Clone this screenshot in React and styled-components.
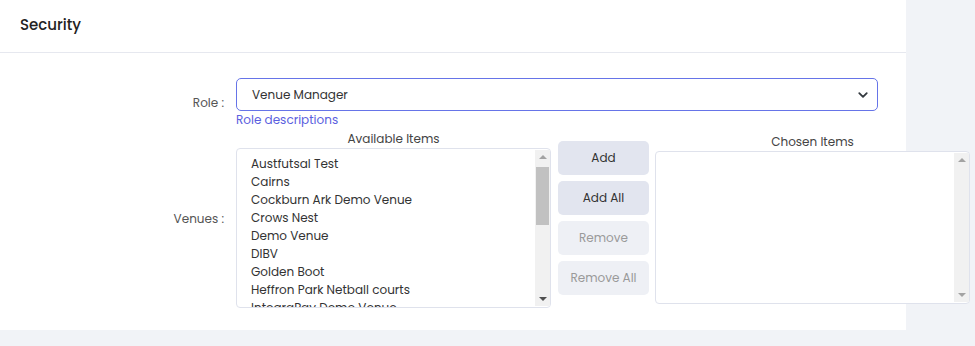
import React from 'react'
import styled, { createGlobalStyle, css } from 'styled-components'

const GlobalStyle = createGlobalStyle`
  html, body {
    margin: 0;
    padding: 0;
    background: #f1f3f7;
    font-family: Poppins, Inter, "Open Sans", sans-serif;
  }
`

const Page = styled.div`
  width: 975px;
  height: 346px;
  overflow: hidden;
`

const Card = styled.div`
  width: 906px;
  height: 330px;
  background-color: #ffffff;
`

const CardHeader = styled.div`
  height: 53px;
  border-bottom: 1px solid #e6e8ef;
  display: flex;
  align-items: center;
  padding-left: 20px;
  padding-bottom: 4px;
  box-sizing: border-box;
  font-size: 15px;
  font-weight: 500;
  color: #222;
`

const CardBody = styled.div`
  padding: 25px 28px 0 0;
  display: flex;
  flex-direction: column;
  gap: 2px;
`

const FormRow = styled.div`
  display: grid;
  grid-template-columns: 224px 1fr;
  column-gap: 12px;
  align-items: center;
`

const Label = styled.div`
  text-align: right;
  font-size: 12px;
  color: #555;
`

const Field = styled.div`
  display: flex;
  flex-direction: column;
`

const SelectBox = styled.div`
  height: 33px;
  box-sizing: border-box;
  border: 1px solid #6674e8;
  border-radius: 5px;
  display: flex;
  align-items: center;
  justify-content: space-between;
  padding: 0 8px 0 15px;
  font-size: 12px;
  color: #333;
`

const RoleLink = styled.a`
  margin-top: 1px;
  font-size: 12px;
  line-height: 16px;
  color: #5b5fe0;
  text-decoration: none;
`

const DualList = styled.div`
  display: flex;
  align-items: flex-start;
  gap: 7px;
`

const ListColumn = styled.div`
  width: 315px;
  display: flex;
  flex-direction: column;
  align-items: stretch;
  ${props =>
    props.chosen &&
    css`
      margin-left: -1px;
      padding-top: 3px;
    `};
`

const ListTitle = styled.div`
  text-align: center;
  font-size: 12px;
  line-height: 18px;
  color: #444;
`

const ListBox = styled.div`
  height: ${props => props.h}px;
  box-sizing: border-box;
  border: 1px solid #dfe2ec;
  border-radius: 4px;
  display: flex;
  overflow: hidden;
  background: #fff;
`

const Items = styled.div`
  flex: 1;
  padding: 6px 0 0 14px;
  overflow: hidden;
`

const Item = styled.div`
  font-size: 12px;
  line-height: 18px;
  color: #333;
  white-space: nowrap;
`

const Scrollbar = styled.div`
  width: 15px;
  margin-top: 1px;
  margin-bottom: 1px;
  background: #f1f1f1;
  display: flex;
  flex-direction: column;
  align-items: center;
  justify-content: space-between;
  padding: 5px 0;
  box-sizing: border-box;
  position: relative;
`

const Arrow = styled.div`
  width: 0;
  height: 0;
  border-left: 4px solid transparent;
  border-right: 4px solid transparent;
  ${props =>
    props.down
      ? css`
          border-top: 4px solid ${props.dim ? '#a3a3a3' : '#505050'};
        `
      : css`
          border-bottom: 4px solid #a3a3a3;
        `};
`

const Thumb = styled.div`
  position: absolute;
  left: 1px;
  right: 1px;
  top: 17px;
  height: 58px;
  background: #c1c1c1;
`

const Buttons = styled.div`
  width: 91px;
  margin-top: 11px;
  display: flex;
  flex-direction: column;
  gap: 6px;
`

const MoveButton = styled.button`
  height: 34px;
  border: none;
  border-radius: 5px;
  font-family: inherit;
  font-size: 12px;
  background: ${props => (props.disabled ? '#eef0f5' : '#e2e5ef')};
  color: ${props => (props.disabled ? '#9a9a9a' : '#333')};
  padding: 0;
`

const Chevron = () => (
  <svg width="12" height="12" viewBox="0 0 16 16">
    <path d="M3 5.5l5 5 5-5" fill="none" stroke="#343a40" strokeWidth="2.4" strokeLinecap="round" strokeLinejoin="round" />
  </svg>
)

const venues = [
  'Austfutsal Test',
  'Cairns',
  'Cockburn Ark Demo Venue',
  'Crows Nest',
  'Demo Venue',
  'DIBV',
  'Golden Boot',
  'Heffron Park Netball courts',
  'IntegraPay Demo Venue',
]

export default function App() {
  return (
    <Page>
      <GlobalStyle />
      <Card>
        <CardHeader>Security</CardHeader>
        <CardBody>
          <FormRow>
            <Label>Role :</Label>
            <Field>
              <SelectBox>
                Venue Manager
                <Chevron />
              </SelectBox>
              <RoleLink href="#">Role descriptions</RoleLink>
            </Field>
          </FormRow>
          <FormRow>
            <Label>Venues :</Label>
            <DualList>
              <ListColumn>
                <ListTitle>Available Items</ListTitle>
                <ListBox h={160}>
                  <Items>
                    {venues.map(v => (
                      <Item key={v}>{v}</Item>
                    ))}
                  </Items>
                  <Scrollbar>
                    <Arrow />
                    <Thumb />
                    <Arrow down />
                  </Scrollbar>
                </ListBox>
              </ListColumn>
              <Buttons>
                <MoveButton>Add</MoveButton>
                <MoveButton>Add All</MoveButton>
                <MoveButton disabled>Remove</MoveButton>
                <MoveButton disabled>Remove All</MoveButton>
              </Buttons>
              <ListColumn chosen>
                <ListTitle>Chosen Items</ListTitle>
                <ListBox h={153}>
                  <Items />
                  <Scrollbar>
                    <Arrow dim />
                    <Arrow down dim />
                  </Scrollbar>
                </ListBox>
              </ListColumn>
            </DualList>
          </FormRow>
        </CardBody>
      </Card>
    </Page>
  )
}
